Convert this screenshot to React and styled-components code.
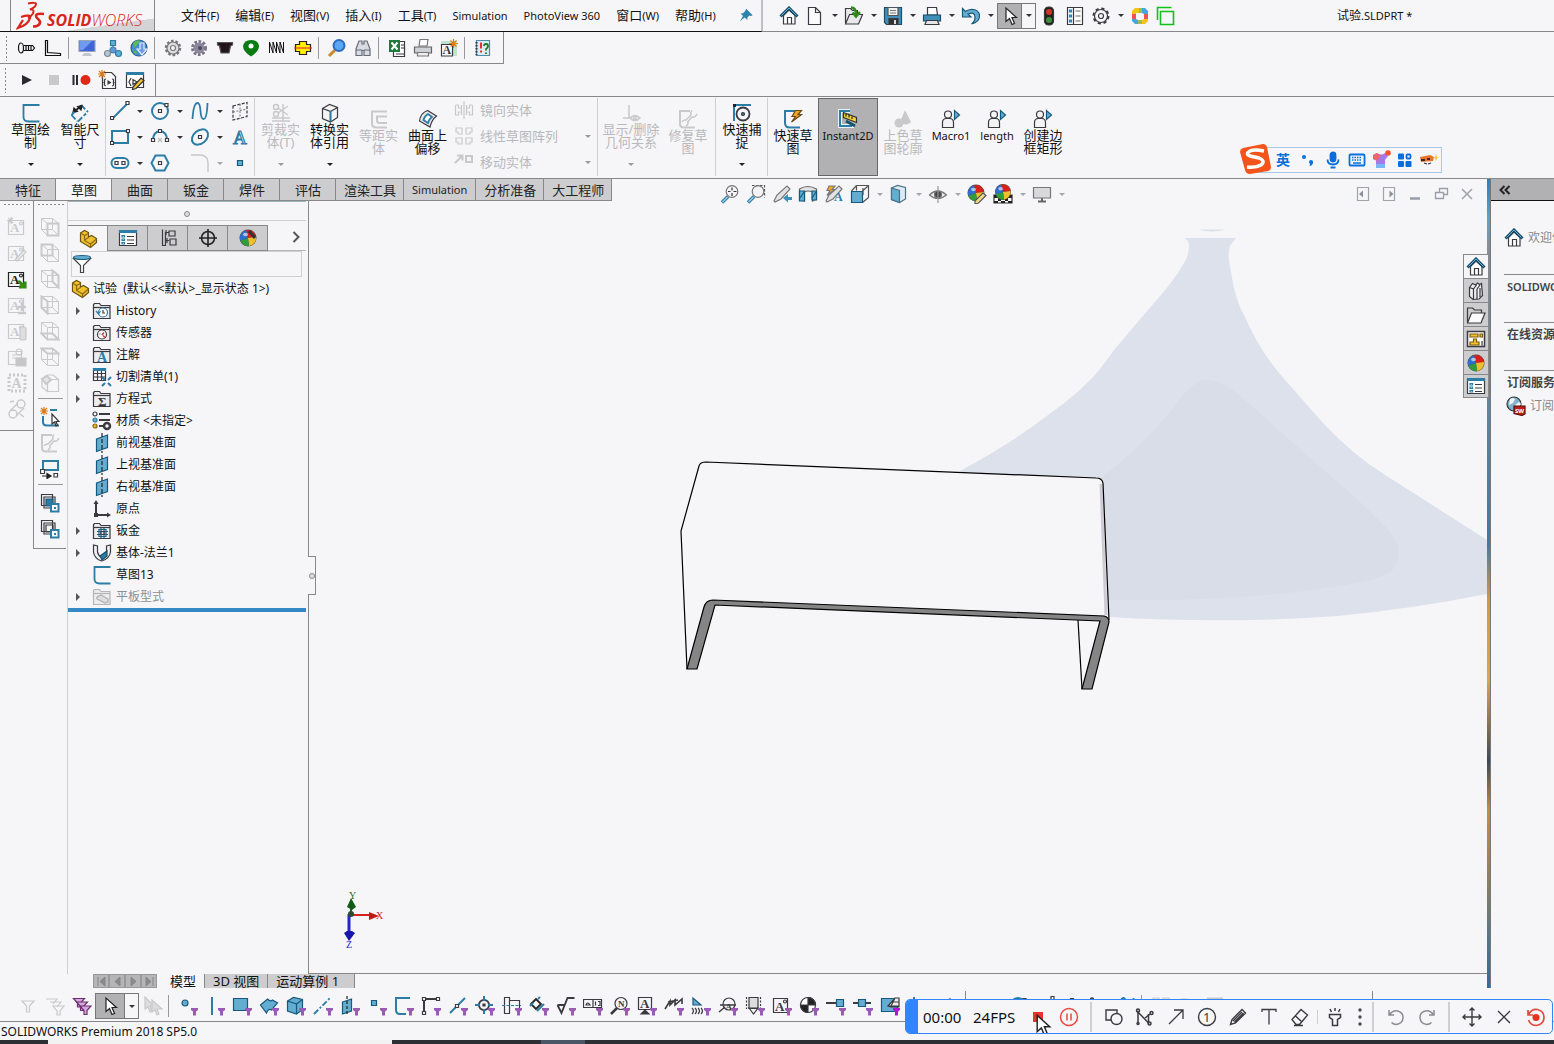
import React, { useState } from "react";
import styled, { createGlobalStyle, css } from "styled-components";

const DARK = "#3a3a40";
const STEEL = "#2c7da6";
const SKY = "#62add0";
const PALE = "#c9c9cb";
const PURPLE = "#9a5bb5";

/* ---------- shared drawing pieces ---------- */

const Folder = ({ color = DARK, children }) => (
  <>
    <path d="M1.5 17.5v-14l1-1h5l1.5 2h9v13z" fill="#ececee" stroke={color} />
    <path d="M1.5 6.5h16.5" stroke={color} />
    {children}
  </>
);

const Cube = ({ face, color = PALE }) => (
  <g stroke={color} strokeWidth="1">
    {face && <path d={face} strokeWidth="2" />}
    <path d="M1.5 1.5h11v11h-11zM7.5 6.5h11v12h-11zM1.5 1.5l6 5M12.5 1.5l6 5M1.5 12.5l6 6M12.5 12.5l6 6" />
  </g>
);

const Letter = ({ x = 3, y = 15, size = 14, weight = 700, color = DARK, children }) => (
  <text
    x={x}
    y={y}
    fontSize={size}
    fontFamily="Liberation Serif, serif"
    fontWeight={weight}
    fill={color}
    stroke="none"
  >
    {children}
  </text>
);

const NoteBox = ({ color = PALE, children }) => (
  <>
    <path d="M1.5 3.5h15v14h-15z" stroke={color} />
    <Letter x={3} y={15} size={13} color={color}>
      A
    </Letter>
    <circle cx="14" cy="6.5" r="1.5" stroke={color} />
    {children}
  </>
);

const Funnel = ({ color = PURPLE }) => (
  <path d="M13 12h7v2l-2 1.5v4h-3v-4l-2-1.5z" fill={color} stroke="none" />
);

const Ball = ({ cx = 10, cy = 10, r = 8 }) => (
  <g stroke="none" transform={`translate(${cx} ${cy}) scale(${r / 8})`}>
    <circle r="8.5" fill="#4a4a4a" />
    <path d="M0 0L-2-7.8A8 8 0 0 1 8-1z" fill="#d8201c" />
    <path d="M0 0L8-1A8 8 0 0 1 1 7.9z" fill="#f0c02c" />
    <path d="M0 0L1 7.9A8 8 0 0 1-7.6 2.5z" fill="#2f9e3a" />
    <path d="M0 0L-7.6 2.5A8 8 0 0 1-2-7.8z" fill="#2d6fd0" />
    <ellipse cx="-2.5" cy="-3.5" rx="2.5" ry="1.8" fill="#fff" opacity=".6" />
  </g>
);

const Lens = ({ children }) => (
  <>
    <path d="M2 18.500l6-6" stroke={STEEL} strokeWidth="3.500" />
    <path d="M2.5 18l5-5" stroke="#9ccbe2" strokeWidth="1.500" />
    <circle cx="12" cy="7.500" r="5.800" fill="#f4f4f6" stroke="#777" />
    {children}
  </>
);

const Macro = () => (
  <>
    <circle cx="7" cy="5.500" r="3.500" fill="#f4f4f4" />
    <path d="M1.5 18.5v-5q0-4 4-4h3q4 0 4 4v5z" fill="#f4f4f4" />
    <path d="M13.5 1.5v9l5-4.5z" fill={SKY} stroke="#17597c" />
  </>
);

const Plane = () => (
  <>
    <path d="M4.5 6l11-4v12.5l-11 4z" fill={SKY} stroke="#17597c" />
    <path d="M10 0v20" stroke="#222" strokeDasharray="4 2" />
  </>
);

const Grid4 = () => (
  <path
    d="M2 2h6v6h-4v-2h-2zM12 2h6v4h-2v2h-4zM2 12h6v6h-4v-2h-2zM12 12h6v4h-2v2h-4z"
    stroke={PALE}
  />
);

const Part = () => (
  <>
    <path
      d="M2.5 4l4-2.500 4 2v4.500l3-1.500 5 3v4l-6 5-10-6z"
      fill="#f1c22d"
      stroke="#6b5213"
    />
    <path
      d="M2.5 4l4 2.500 4-2M6.500 6.500v5l6 3.500 6-5M12.500 15v3.500M6.500 11l4-2.500"
      stroke="#8c6b16"
    />
  </>
);

const ListBoard = () => (
  <>
    <path d="M1.5 2.5h17v15h-17z" fill="#fff" />
    <path d="M1 3.5h18" stroke={STEEL} strokeWidth="3" />
    <path d="M4 7.5h2.5v1.5h-2.5zM4 11h2.5v1.5h-2.5zM4 14.5h2.5v1.5h-2.5z" stroke={STEEL} />
    <path d="M9 8.5h7M9 12h7M9 15.5h7" />
  </>
);

const icons = {
  /* quick access */
  home: (
    <>
      <path d="M4.5 9.5v8.5h11.5v-8.5l-6-5.5z" fill="#fff" />
      <path d="M1.5 10.5l8.5-8.5 8.5 8.5" stroke="#174f6c" strokeWidth="3" />
      <path d="M2.5 9.5l7.5-7.5 7.5 7.5" stroke={SKY} strokeWidth="1" />
      <path d="M8.5 18v-6.5h4v6.5" />
    </>
  ),
  file: <path d="M3.5 1.5h7l5 5v12h-12zM10.5 1.5v5h5" fill="#fbfbfb" />,
  open: (
    <>
      <path d="M1.5 17v-14.5h5l2 2h5v3.5M1.5 18l4-9.5h13l-4 9.5z" fill="#e9e9eb" />
      <path d="M7 1.5q5 0 5 7M8.500 6.500l3.500 4 4-4.500" stroke="#2f8a1b" strokeWidth="2.500" />
    </>
  ),
  save: (
    <>
      <path d="M1.5 1.5h17v17h-15l-2-2z" fill="#3f8fb7" stroke="#1a4f6b" />
      <path d="M5 1.5h10v8h-10z" fill="#f2f2f2" stroke="#555" />
      <path d="M7 4.5h6M7 7h6" stroke="#777" />
      <path d="M6 12.5h9v6h-9z" fill="#333" />
      <path d="M11 14h2v4h-2z" fill="#ddd" stroke="none" />
    </>
  ),
  print: (
    <>
      <path d="M5.5 9v-7.500h9l1 7.500z" fill="#fff" />
      <path d="M1.5 9h17v6h-17z" fill="#3f8fb7" stroke="#174f6c" />
      <path d="M4.5 14.5h11l1.5 4h-14z" fill="#e5e5e5" />
    </>
  ),
  undo: (
    <path
      d="M1.5 2.5v8.500h8.500l-3-3q7-3 7 3.500 0 4-3.500 6.500 8-2 8-8 0-7-9-6.500-3 .5-5 2z"
      fill={SKY}
      stroke="#17597c"
    />
  ),
  cursor: <path d="M6 2v13.5l3.5-3 2.5 6 2.5-1-2.5-6h4.5z" fill="#fff" stroke="#222" />,
  light: (
    <>
      <rect x="5.5" y="1" width="9" height="18" rx="4" fill="#222" />
      <circle cx="10" cy="6" r="3" fill="#d33426" stroke="none" />
      <circle cx="10" cy="14" r="3" fill="#3f8f3a" stroke="none" />
    </>
  ),
  options: (
    <>
      <path d="M2.5 1.5h15v17h-15z" fill="#fff" />
      <path d="M8.5 1.5v17" />
      <path d="M4.5 4h2v2h-2zM4.5 9h2v2h-2zM4.5 14h2v2h-2z" fill={SKY} stroke={STEEL} />
      <path d="M10.5 5h5M10.5 10h5M10.5 15h5" stroke="#666" />
    </>
  ),
  gear: (
    <>
      <circle cx="10" cy="10" r="7.5" strokeWidth="2" strokeDasharray="3.2 2.7" />
      <circle cx="10" cy="10" r="6.5" fill="#f6f6f6" />
      <circle cx="10" cy="10" r="2.5" />
    </>
  ),
  swatch: (
    <g stroke="none">
      <path d="M5 2h4v5h-3v3h-4v-5z" fill="#f0c419" />
      <path d="M9 2h3v5h-3z" fill="#9bbf57" />
      <path d="M12 2h3l3 3v3h-4l-2-1z" fill="#4aa3df" />
      <path d="M2 8h4v5h-4z" fill="#f0524f" />
      <path d="M14 8h4v5h-4z" fill="#f0524f" />
      <path d="M2 13h4l2 1v4h-3l-3-3z" fill="#4aa3df" />
      <path d="M8 14h4v4h-4z" fill="#9bbf57" />
      <path d="M12 14l2-1h4v2l-3 3h-3z" fill="#f0c419" />
    </g>
  ),
  windows: (
    <path d="M1.5 14v-12.5h14M4.5 5.5h13v13h-13z" stroke="#12c21c" strokeWidth="1.6" />
  ),
  pin: (
    <path
      d="M9 1l8 8-2 1-2-.5-2.500 2.500 0 3-3.500-3-6 5 4-7-3-3 3-.500 2.500-2.500z"
      fill="#2f84ad"
      stroke="none"
    />
  ),

  /* add-in row */
  bolt: (
    <>
      <ellipse cx="4" cy="10" rx="2.5" ry="5" stroke="#111" />
      <path d="M6.5 7.5h9l2 2.5-2 2.5h-9M9 7.5v5M11.5 7.5v5M14 7.5v5" stroke="#111" />
    </>
  ),
  angle: <path d="M2.5 2.5h2v12l13 1v2h-15z" stroke="#111" />,
  monitor: (
    <>
      <path d="M2 2.5h16v11h-16z" fill="#3e66d8" stroke="#9aa3b5" />
      <path d="M3 3h12l-9 9h-3z" fill="#6f9af0" stroke="none" />
      <path d="M7 15h6l2 3h-10z" fill="#c2c6cf" stroke="none" />
    </>
  ),
  network: (
    <>
      <path d="M10 6v5M5 15l5-4 5 4" stroke="#5c7080" />
      <path d="M7.5 2.5h5v5h-5z" fill={SKY} stroke={STEEL} />
      <circle cx="10" cy="12" r="3" fill="#5d9bd8" stroke="#4a7fb0" />
      <circle cx="4.5" cy="15.500" r="3" fill="#b8c6d2" stroke="#7c8a96" />
      <circle cx="15.500" cy="15.500" r="3" fill={SKY} stroke={STEEL} />
    </>
  ),
  globe: (
    <>
      <circle cx="10" cy="10" r="8" fill="#3f8fd2" stroke="#2d5b91" />
      <path d="M4 5q4-4 7-2l-3 4-3 3zM3 11l5 3-1 3.5z" fill="#5cb85c" stroke="none" />
      <path d="M11 5h4v6h3l-5 6-5-6h3z" fill="#6e9ce8" stroke="#e8eefc" />
    </>
  ),
  cogGray: (
    <>
      <circle cx="10" cy="10" r="7" stroke="#777" strokeWidth="2.5" strokeDasharray="2.6 1.8" />
      <circle cx="10" cy="10" r="6" fill="#ddd" stroke="#777" />
      <circle cx="10" cy="10" r="2.5" fill="#f6f6f9" stroke="#777" />
    </>
  ),
  cogDark: (
    <>
      <circle cx="10" cy="10" r="6.5" stroke="#777285" strokeWidth="3" strokeDasharray="2.6 1.6" />
      <circle cx="10" cy="10" r="5.5" fill="#8c879c" stroke="none" />
      <circle cx="11" cy="10" r="2" fill="#4f4a60" stroke="none" />
    </>
  ),
  pulley: <path d="M2.5 4.5h15v2.5l-2 1-1.500 7h-8l-1.500-7-2-1z" fill="#24141c" stroke="#555" />,
  cam: (
    <>
      <path d="M10 18.5q-8-5-8-10.500 1-6 8-6t8 6q0 5.500-8 10.500z" fill="#0a7a12" stroke="none" />
      <circle cx="10" cy="8" r="2.5" fill="#fff" stroke="none" />
    </>
  ),
  spring: (
    <path d="M2.5 15v-11l3.5 11v-11l3.500 11v-11l3.500 11v-11l3.500 11v-11" stroke="#111" strokeWidth="1" />
  ),
  cross: (
    <>
      <path d="M6.5 3.5h7v3h4v7h-4v3h-7v-3h-4v-7h4z" fill="#ffef00" stroke="#222" />
      <path d="M1 10h18" stroke="#e33" />
    </>
  ),
  search: (
    <>
      <path d="M2 18l6-6" stroke="#c98a2b" strokeWidth="3" />
      <circle cx="12" cy="7.5" r="5.5" fill="#5aa8f4" stroke="#2d6ac0" strokeWidth="2" />
    </>
  ),
  binoculars: (
    <path
      d="M3 11l3-8h3v3h2v-3h3l3 8v6.5h-6v-5h-2v5h-6zM3 12h6M11 12h6"
      fill="#d9dbe1"
      stroke="#666b78"
    />
  ),
  excel: (
    <>
      <path d="M6.5 3.5h11v15h-11z" fill="#fff" />
      <path d="M2 2h11v12h-11z" fill="#1e7a3c" stroke="none" />
      <path d="M4.5 4.5l6 7M10.5 4.5l-6 7" stroke="#fff" strokeWidth="2" />
      <path d="M14 7h3M14 10h3M9 16h8" />
    </>
  ),
  printer: (
    <>
      <path d="M6 8l1-6.5h8l-1 6.5z" fill="#fff" stroke="#777" />
      <path d="M1.5 9h17v6h-17z" fill="#cfd1d6" stroke="#666" />
      <path d="M4.5 14.5h11v3.5h-11z" fill="#eee" stroke="#777" />
    </>
  ),
  annotNew: (
    <>
      <path d="M2 3h16v15h-16z" fill="#bfe3cf" stroke="none" />
      <path d="M2.5 6.5h11v11.5h-11z" fill="#fff" />
      <Letter x={3.5} y={16} size={12}>
        A
      </Letter>
      <path d="M14.5 1v9M10 5.500h9M11.500 2.500l6 6M17.500 2.500l-6 6" stroke="#e07b12" />
    </>
  ),
  helpBook: (
    <>
      <path d="M3.5 2.5h13v15h-13z" fill="#dcecf2" stroke="#4e8bab" />
      <path d="M3.5 4v13" stroke="#333" strokeWidth="2" strokeDasharray="1.5 1.5" />
      <path d="M8 4.500v6M8 12.500v2" stroke="#d33" strokeWidth="2" />
      <path d="M11 8q0-2 2-2t2 2-2 3v1.500M13 14.500v1.500" stroke="#187a22" strokeWidth="1.800" />
    </>
  ),

  /* macro row */
  play: <path d="M5 5l10 5-10 5z" fill="#2b2b2f" stroke="none" />,
  stop: <path d="M5 5h10v10h-10z" fill={PALE} stroke="none" />,
  pauseRec: (
    <>
      <path d="M2.5 5v10M6 5v10" stroke="#2b2b2f" strokeWidth="2" />
      <circle cx="14.5" cy="10" r="5" fill="#dc2a17" stroke="none" />
    </>
  ),
  macroNew: (
    <>
      <path d="M4.5 2.5h9l4 4v12h-13z" fill="#f8f8f8" />
      <path d="M8 9q-2 0-1.500 2t-1 1.500q1.500 0 1 1.500t1.500 2M14 9q2 0 1.500 2t1 1.500q-1.500 0-1 1.500t-1.500 2" />
      <path d="M9.500 10v5l4-2.500z" fill={DARK} stroke="none" />
      <path d="M4 0v8M0 4h8M1 1l6 6M7 1l-6 6" stroke="#d97a1a" />
    </>
  ),
  macroEdit: (
    <>
      <path d="M1.5 2.5h17v15h-17z" fill="#fff" />
      <path d="M1 3.5h18" stroke={STEEL} strokeWidth="3" />
      <path d="M6 8l-2 4 2 4M8 9.5v5l4-2.5z" />
      <path d="M8 17l8-9 3 2.5-8 8-3.500 1z" fill="#f2c230" stroke="#333" />
    </>
  ),

  /* sketch ribbon */
  sketch: <path d="M18.5 2h-16v12q0 4.500 5 4.500h11" stroke={STEEL} strokeWidth="1.800" />,
  dimension: (
    <>
      <path d="M1.500 12l6 6.500M11 2l7 7M8 18.500l8-8" stroke={STEEL} strokeWidth="1.800" strokeDasharray="6 2" />
      <path d="M3 9.500l1-4.500 3.500 3.500zM12 2.500l-4.500 1 3.500 3.500z" fill="#222" stroke="#222" />
      <path d="M5 8l6-5" stroke="#222" strokeWidth="2" />
      <path d="M1.500 12l3-3" stroke={STEEL} strokeWidth="1.800" />
    </>
  ),
  line: (
    <>
      <path d="M3 17l14-14" stroke={STEEL} strokeWidth="2" />
      <path d="M.5 15.5h3v3h-3zM16 .5h3v3h-3z" fill="#fff" />
    </>
  ),
  circle: (
    <>
      <circle cx="10" cy="10" r="8" stroke={STEEL} strokeWidth="2" />
      <path d="M8.5 8.5h3v3h-3zM15 2.5h3v3h-3z" fill="#fff" />
    </>
  ),
  spline: (
    <path d="M2.5 18q1-16 5-16 2.500 0 3 8t3 8q3.500 0 4-16" stroke={STEEL} strokeWidth="1.800" />
  ),
  planeBox: (
    <>
      <path d="M3 5l14-3.500v14l-14 3.500z" strokeDasharray="3 1.5" />
      <path d="M10 3v15M3 11l14-3" stroke="#888" strokeDasharray="2 1.5" />
    </>
  ),
  rect: (
    <>
      <path d="M2 4h16v12h-16z" stroke={STEEL} strokeWidth="2" />
      <path d="M.5 14.5h3v3h-3zM16.5 2.5h3v3h-3z" fill="#fff" />
    </>
  ),
  arc: (
    <>
      <path d="M3 13q0-8 7-9 7 1 7 9" stroke={STEEL} strokeWidth="2" />
      <path d="M1.5 11.5h3v3h-3zM15.5 11.5h3v3h-3zM8.5 2.5h3v3h-3z" fill="#fff" />
      <path d="M8 11l4 4M12 11l-4 4" stroke="#bbb" />
    </>
  ),
  ellipse: (
    <>
      <ellipse cx="10" cy="10" rx="9" ry="6.5" transform="rotate(-40 10 10)" stroke={STEEL} strokeWidth="2" />
      <path d="M8.5 8.5h3v3h-3z" fill="#fff" />
    </>
  ),
  text: (
    <text x="3" y="17" fontSize="19" fontFamily="Liberation Serif, serif" fill="#fff" stroke={STEEL}>
      A
    </text>
  ),
  slot: (
    <>
      <rect x="1.5" y="5" width="17" height="10" rx="5" stroke={STEEL} strokeWidth="2" />
      <path d="M5 8.5h3v3h-3zM12 8.5h3v3h-3z" fill="#fff" />
    </>
  ),
  polygon: (
    <>
      <path d="M5.5 2.5h9l4 7.5-4 7.5h-9l-4-7.500z" stroke={STEEL} strokeWidth="2" />
      <path d="M8.5 8.5h3v3h-3z" fill="#fff" />
    </>
  ),
  fillet: <path d="M1 2h9q8 0 8 8v9" stroke={PALE} strokeWidth="1.5" />,
  point: <path d="M7.5 7.5h5v5h-5z" fill={SKY} stroke="#17597c" />,
  trim: (
    <g stroke={PALE} strokeWidth="1.5">
      <circle cx="5" cy="4" r="2.5" />
      <circle cx="5" cy="11" r="2.5" />
      <path d="M7 5l10 7M7 10l10-7M12 1v18M1 15h18M1 18h18" />
    </g>
  ),
  convert: (
    <>
      <path d="M2.5 5.5l7-4 8 3v10l-7 4.5-8-3.5zM2.5 5.5l8 3v10.5M10.5 8.5l7-4" fill="#f4f4f4" />
      <path d="M10.5 8v10.5" stroke={STEEL} strokeWidth="2" />
    </>
  ),
  offset: <path d="M18 2.5h-15v12q0 4 5 4h10M18 7.5h-10v4q0 2.500 3 2.500h7" stroke={PALE} strokeWidth="2" />,
  surfOffset: (
    <>
      <path d="M1.5 12q1-8 8-10.500l9 5.500q-5 4-6.500 11z" fill="#e8e8ea" />
      <path d="M5.5 11q1-4 4.500-6l4 3q-3 2-4 6z" fill="#fff" stroke={STEEL} strokeWidth="1.8" />
    </>
  ),
  mirror: (
    <path
      d="M10 1v18M1.5 5h3v3h3v-3M1.5 5v10h3v-3h3v3M7.500 5v10M18.500 5h-3v3h-3v-3M18.500 5v10h-3v-3h-3v3M12.500 5v10"
      stroke={PALE}
    />
  ),
  pattern: <Grid4 />,
  move: (
    <g stroke={PALE} strokeWidth="2">
      <path d="M1 11l7-7M3 3.500h5.500v5M12 4h6v6h-6z" />
    </g>
  ),
  relations: (
    <g stroke={PALE} strokeWidth="1.5">
      <path d="M8 2v13M2 15h7" />
      <path d="M9 15q5-5 10 0-5 5-10 0z" fill="#eee" />
      <circle cx="14" cy="15" r="1.5" />
    </g>
  ),
  repair: (
    <g stroke={PALE} strokeWidth="1.5">
      <path d="M12 2h-10v13q0 3.500 4 3.500h11" strokeWidth="2" />
      <path d="M14 1.5q-2 2-1 4.500l-5 5q-3-.500-4 2M19 5q-2 4-5 3l-4 4.500q.5 3-2 4.500" />
    </g>
  ),
  snap: (
    <>
      <path d="M2 18v-16h17" stroke={STEEL} strokeWidth="2" />
      <circle cx="11" cy="11" r="6.5" strokeWidth="1.8" />
      <circle cx="11" cy="11" r="1.500" fill={STEEL} />
      <path d="M1 1h3v3h-3z" fill="#222" stroke="none" />
    </>
  ),
  rapid: (
    <>
      <path d="M12 2h-10v12q0 4.500 5 4.500h10" stroke={STEEL} strokeWidth="2" />
      <path d="M12.5 1.5h6l-3.500 4h3.500l-10 7.500 4-5.500h-3.500z" fill="#f5a623" stroke="#6b4a10" />
    </>
  ),
  instant: (
    <>
      <path d="M12 2h-10v15h14" stroke="#e9f4fa" strokeWidth="4" />
      <path d="M12 2h-10v15h12" stroke={STEEL} strokeWidth="2" />
      <path d="M5.5 3.5l13 5v5l-13-5z" fill="#f7d433" stroke="#333" />
      <path d="M8 5v2.500M11 6v2.500M14 7.500v2.500" stroke="#222" />
      <path d="M8 12l9 5" stroke="#174f6c" strokeWidth="3" />
    </>
  ),
  shaded: (
    <g fill={PALE} stroke="none">
      <path d="M12 1l6 12q-5 5-11 0z" />
      <circle cx="6" cy="14" r="4.500" />
    </g>
  ),
  macro: <Macro />,

  /* heads-up view */
  zoomFit: (
    <Lens>
      <path d="M12 3.500v3M12 9v3M8 7.500h2.500M13.500 7.500h3" stroke="#333" />
    </Lens>
  ),
  zoomArea: (
    <>
      <path d="M6 1.500h12.500v12" stroke="#555" strokeDasharray="2.5 1.5" />
      <Lens />
    </>
  ),
  prevView: (
    <>
      <path d="M2 17l3-6 10-9 3 3-9 10-6 3z" fill="#e2e2e4" stroke="#777" />
      <path d="M11 14l5-4v3h4v3h-4v2.500z" fill="#3c8fba" stroke="none" />
    </>
  ),
  section: (
    <>
      <path d="M1.5 5q8-5 17 0v10l-4 2v-9q-5-2-8 0v9l-5-1z" fill="#e2e2e4" stroke="#666" />
      <path d="M1.5 7h5v10h-5zM14 7h4.500v9h-4.500z" fill={SKY} stroke="#17597c" />
      <path d="M2 14l4-6M14 14l4-6" stroke="#17597c" />
    </>
  ),
  annotView: (
    <>
      <path d="M2 17l3-6 10-9 3 3-9 10-6 3z" fill="#e2e2e4" stroke="#777" />
      <path d="M5 2h6l-3 3.500h3l-8 6 3-5h-3z" fill="#f5a623" stroke="#777" />
      <Letter x={10} y={17} size={12} color={STEEL}>
        A
      </Letter>
    </>
  ),
  viewCube: (
    <>
      <path d="M6.5 1.5h12v12M1.5 7l5-5.500M12.5 7l6-5.500M12.5 18.500l6-5M6.500 1.500v5" stroke="#555" />
      <path d="M1.5 7.5h11v11h-11z" fill={SKY} stroke="#17597c" />
      <path d="M13 4v7" stroke="#555" />
    </>
  ),
  displayStyle: (
    <>
      <path d="M2.5 4l6-2.5 8 2v11.5l-6 3.5-8-3z" fill="#dcebf2" stroke="#4c7186" />
      <path d="M2.5 4l8 2.5v12l-8-3z" fill={SKY} stroke="#4c7186" />
    </>
  ),
  eye: (
    <>
      <path d="M1.5 11q8-8 17 0-9 7-17 0z" fill="#eee" stroke="#777" />
      <circle cx="10" cy="10.5" r="3.5" fill="#444" stroke="#777" />
      <path d="M10 2v17" stroke="#999" />
    </>
  ),
  appearance: (
    <>
      <Ball cx={9} cy={9} />
      <path d="M8 17l8-8 3 2.5-7.500 7.500-3.500 1z" fill="#f2e08a" stroke="#555" />
    </>
  ),
  scene: (
    <>
      <path d="M1 11h18v8h-18z" fill="#fff" stroke="#333" />
      <path
        d="M1 11h4v3h-4zM15 11h4v3h-4zM5 14h3v3h-3zM12 14h3v3h-3zM1 17h4v2h-4zM8 17h4v2h-4zM15 17h4v2h-4z"
        fill="#222"
        stroke="none"
      />
      <Ball cx={10} cy={8} r={7.5} />
    </>
  ),
  screen: (
    <>
      <path d="M1.5 3.5h17v10.500h-17z" fill="#d9d9dc" stroke="#777" />
      <path d="M10 14v3M6 17.500h8" stroke="#666" strokeWidth="2" />
    </>
  ),
  paneLeft: (
    <>
      <path d="M4.5 3.5h11v13h-11z" stroke="#a0a2ac" />
      <path d="M10 6.5v7l-4-3.500z" fill="#8e909a" stroke="none" />
    </>
  ),
  paneRight: (
    <>
      <path d="M4.5 3.5h11v13h-11z" stroke="#a0a2ac" />
      <path d="M10.5 6.5v7l4-3.500z" fill="#8e909a" stroke="none" />
    </>
  ),
  minimize: <path d="M5 14.5h10" stroke="#9a9ca6" strokeWidth="2.5" />,
  restore: <path d="M4.5 8.5h8v6h-8zM8.5 8v-3.500h8v6h-4" stroke="#9a9ca6" strokeWidth="1.3" />,
  close: <path d="M5 5l10 10M15 5l-10 10" stroke="#a0a2a8" strokeWidth="1.5" />,

  /* left bars */
  note1: (
    <NoteBox>
      <path d="M4 0v7M0 3.500h8M1 1l5 5M6 1l-5 5" stroke={PALE} />
    </NoteBox>
  ),
  note2: (
    <NoteBox>
      <path d="M8 17l9-10 2 2-9 9z" fill="#eee" stroke={PALE} />
    </NoteBox>
  ),
  note3: (
    <NoteBox color="#222">
      <path d="M11 12h2l4 4v-3l2 0v6h-6.500v-2h2z" fill="#3a8a12" stroke="#3a8a12" />
    </NoteBox>
  ),
  note4: (
    <NoteBox>
      <path d="M11 12h8M15 8v8M11 18h8" stroke={PALE} strokeWidth="2.5" />
    </NoteBox>
  ),
  note5: (
    <NoteBox>
      <rect x="13" y="6" width="6" height="13" rx="2" fill="#ddd" stroke={PALE} />
    </NoteBox>
  ),
  note6: (
    <g stroke={PALE}>
      <path d="M1.5 4.5h13v13h-13zM5 8h9M5 11h9" />
      <path d="M9 11h10v8h-10z" fill="#c6c6c8" />
      <circle cx="12" cy="5" r="3" />
    </g>
  ),
  note7: (
    <>
      <path d="M2 2h16v16h-16z" stroke={PALE} strokeWidth="3" strokeDasharray="2 2" />
      <Letter x={4.5} y={15} size={14} color={PALE}>
        A
      </Letter>
    </>
  ),
  note8: (
    <g stroke={PALE} strokeWidth="1.5">
      <circle cx="6" cy="15" r="4" />
      <circle cx="14" cy="5" r="4" />
      <path d="M3 12l8-8M9 17l8-8M13 15l4 3M3 3l4-1" />
    </g>
  ),
  cube1: <Cube face="M7.5 6.5h11v12h-11z" />,
  cube2: <Cube face="M1.5 1.5h11v11h-11z" />,
  cube3: <Cube face="M12.5 1.5l6 5v12l-6-6z" />,
  cube4: <Cube face="M1.5 1.5l6 5v12l-6-6z" />,
  cube5: <Cube face="M1.5 12.5l6 6h11l-6-6z" />,
  cube6: <Cube face="M1.5 1.5l6 5h11l-6-5z" />,
  cube7: (
    <g stroke={PALE}>
      <path d="M7.5 6.5h11v12h-11zM2 6l5-4 6 0 5.500 4.500M2 6v8l6 5" />
      <path d="M2 6l4 5 5-4-4-4z" fill="#e4e4e4" strokeWidth="2" />
    </g>
  ),
  sketchSelect: (
    <>
      <path d="M10 3h7M3 9v6q0 3.500 4 3.500h12" stroke={STEEL} strokeWidth="2" />
      <path d="M4 0v8M0 4h8M1 1l6 6M7 1l-6 6" stroke="#d97a1a" />
      <path d="M12 7v10l2.500-2 1.500 4 1.500-.500-1.500-4h3z" fill="#fff" stroke="#333" />
    </>
  ),
  path: (
    <>
      <path d="M3 2h15v9h-15z" stroke={STEEL} strokeWidth="2" />
      <path d="M.5 10.5h4v4h-4zM14 14.5h3.500v3.500h-3.500z" fill="#fff" />
      <path d="M2 17h8M7 14.5l4 2.500-4 2.500z" fill="#222" stroke="#222" />
    </>
  ),
  layersA: (
    <>
      <path d="M1.5 1.5h11v11h-11zM4 4h11v11h-11z" fill="#eee" />
      <path d="M6 6h7v7h-7z" fill={STEEL} stroke="#17597c" />
      <path d="M11 11h7.500v7.500h-7.500z" fill="#fff" stroke={STEEL} strokeWidth="2" />
      <path d="M14 14h2v2h-2z" fill={STEEL} stroke="none" />
    </>
  ),
  layersB: (
    <>
      <path d="M1.5 1.5h11v11h-11zM4 4h11v11h-11zM6 6h7v7h-7z" fill="#f4f4f4" />
      <path d="M11 11h7.500v7.500h-7.500z" fill="#fff" stroke={STEEL} strokeWidth="2" />
      <path d="M14 14h2v2h-2z" fill={STEEL} stroke="none" />
    </>
  ),

  /* feature tree */
  part: <Part />,
  listBoard: <ListBoard />,
  config: (
    <>
      <path d="M4.5 1.5v16h3v-13h3M7 12.500h4M11 3h6v5h-6zM12 11h6v6h-6z" />
      <path d="M8 2v5M9 10v5" />
    </>
  ),
  target: (
    <>
      <circle cx="10" cy="10" r="6.5" stroke="#222" strokeWidth="1.6" />
      <path d="M10 1v18M1 10h18" stroke="#222" strokeWidth="1.6" />
    </>
  ),
  ball: (
    <>
      <Ball cx={10} cy={10} />
      <path d="M11 3l6 7" stroke="#333" strokeWidth="3" />
    </>
  ),
  ballPlain: <Ball cx={10} cy={10} />,
  filter: (
    <>
      <path d="M1.5 4.500l7 7v7h3v-7l7-7z" fill="#fff" stroke="#444" />
      <ellipse cx="10" cy="3.500" rx="8.500" ry="2" fill={SKY} stroke="#1d5f80" />
    </>
  ),
  history: (
    <Folder>
      <circle cx="11" cy="11.5" r="4.500" fill="#fff" stroke={STEEL} />
      <path d="M4 10l2.500 3 2-3" stroke={STEEL} />
      <path d="M11 9v3h2" />
    </Folder>
  ),
  sensor: (
    <Folder>
      <circle cx="10" cy="11.5" r="4.500" fill="#fff" />
      <path d="M10 12l2-2.500M11 12.500l2 2" stroke="#d33" strokeWidth="1.500" />
      <path d="M7.500 11h1" />
    </Folder>
  ),
  annotations: (
    <Folder>
      <Letter x={5} y={17} size={14} color={STEEL}>
        A
      </Letter>
    </Folder>
  ),
  cutlist: (
    <>
      <path d="M1.5 1.5h12v12h-12zM5.5 3v10M9.5 3v10M1.5 6.5h12M1.5 10h12" fill="#fff" />
      <path d="M1 2.5h13" stroke={STEEL} strokeWidth="3" />
      <path d="M10 10l3 3M19 10l-3 3M10 19l3-3M19 19l-3-3" stroke={STEEL} strokeWidth="2" />
    </>
  ),
  equations: (
    <Folder>
      <Letter x={6} y={17} size={13}>
        Σ
      </Letter>
    </Folder>
  ),
  material: (
    <>
      <circle cx="3" cy="3" r="2" />
      <circle cx="3" cy="9" r="2" fill={SKY} stroke={STEEL} />
      <circle cx="3" cy="15" r="2" fill="#f1b51c" stroke="#8a6510" />
      <path d="M7 3h11M7 9h11M7 15h4" strokeWidth="2" />
      <circle cx="15" cy="15" r="3" strokeWidth="2.5" />
    </>
  ),
  plane: <Plane />,
  origin: (
    <>
      <path d="M4 3v13h12" strokeWidth="2" />
      <path d="M1.5 5l2.5-4 2.5 4zM15 13.5l4 2.500-4 2.500zM2 14h4v4h-4z" fill={DARK} stroke="none" />
    </>
  ),
  sheetmetal: (
    <Folder>
      <path d="M7 8.500h7v7h-7zM9 6.500v11M12 6.500v11M5 10.500h11M5 13.500h11" stroke="#1d5f80" />
      <path d="M9 10.500h3v3h-3z" fill="#ddd" />
    </Folder>
  ),
  flange: (
    <>
      <path d="M1.5 2v7q1 7 8 9 8-2 9-9v-7l-4 1v6q-1 4-5 5-3-1-4-5v-6z" fill="#f0f0f2" />
      <path d="M8 13l7-5v5l-5 4z" fill={STEEL} stroke="#174f6c" />
    </>
  ),
  flat: (
    <Folder color="#b5b5b8">
      <path d="M5 10l4-2 7 4v3l-3 1-8-4z" stroke="#b0b0b4" fill="#ddd" />
    </Folder>
  ),

  /* task pane */
  library: (
    <>
      <path d="M3.5 6.5l3-4 3 1.5 2-2 2 1.5 2-1 1 12-3.500 3.500-6 .5-3.500-3z" fill="#eee" />
      <path d="M3.5 6.5l4 1.5v10M7.500 8l3-4M11 8v10.500M11 8l3-4M14 7v9" />
    </>
  ),
  folderOpen: (
    <>
      <path d="M1.5 17v-14h5l2 2h7v3" fill="#ccc" />
      <path d="M1.5 18l4-10h13.500l-4 10z" fill="#fbfbfb" />
    </>
  ),
  palette: (
    <>
      <path d="M1.5 2.5h17v15h-17z" fill="#fff" strokeWidth="1.5" />
      <path
        d="M4 5h8v3h-8zM14 5h2.500v3h-2.500zM7.500 10h3v3h2.500v3h-9v-3h3.500z"
        fill="#f3c22c"
        stroke="#7a5c10"
      />
      <path d="M15 12h2v5h-2z" fill="#888" stroke="none" />
    </>
  ),
  swGlobe: (
    <>
      <circle cx="8" cy="8" r="7" fill="#7fb4cf" stroke="#333" />
      <path d="M4 3q3-2 5 0l-2 4-4 2zM9 9l4-3 2 2-3 5z" fill="#f4f4f4" stroke="none" />
      <path d="M8 10h11v8l-3 1.5-8-2z" fill="#b8201c" stroke="#5c0d0b" />
      <text x="9" y="17" fontSize="6" fontWeight="700" fill="#fff" stroke="none">
        SW
      </text>
    </>
  ),

  /* selection filters */
  funnelGray: <path d="M4 5h12l-4.500 5v6h-3v-6z" stroke={PALE} />,
  funnelsGray: <path d="M1 3h11l-4 5M5 6h11l-4 5M8 10h11l-4 5v4h-3v-4z" stroke={PALE} />,
  funnels: (
    <g stroke="#6d2f73" fill="#d9a8dc">
      <path d="M1.5 2.5h11l-4 4.5v4h-3v-4z" />
      <path d="M4.5 6h11l-4 4.5v4h-3v-4z" />
      <path d="M8 10h11l-4 4.5v4h-3v-4z" />
    </g>
  ),
  cursorGray: (
    <g fill="#dcdcde" stroke={PALE}>
      <path d="M2 1v12l3-2 2 5 2-1-2-5h4z" />
      <path d="M9 4v12l3-2 2 5 2-1-2-5h5z" />
    </g>
  ),
  fVertex: <circle cx="7" cy="7" r="3" fill={SKY} stroke="#17597c" />,
  fEdge: <path d="M7 1v18" stroke={STEEL} strokeWidth="2" />,
  fFace: <path d="M1.5 2.5h14v12h-14z" fill={SKY} stroke="#17597c" />,
  fSurface: <path d="M1.5 9l7-6q3 3 5 1l5 3-6 7q-3-2-5 3z" fill={SKY} stroke="#17597c" />,
  fSolid: (
    <>
      <path d="M1.5 5l6-3.5 9 2v10l-6 4.5-9-3z" fill={SKY} stroke="#17597c" />
      <path d="M1.5 5l9 3v10M10.5 8l6-4.5" stroke="#17597c" />
    </>
  ),
  fAxis: <path d="M1 18l16-16" stroke={STEEL} strokeWidth="1.8" strokeDasharray="6 2 2 2" />,
  fPlane: (
    <>
      <path d="M2.5 6l9-3v12l-9 3z" fill={SKY} stroke="#17597c" />
      <path d="M7 0v20" stroke="#222" strokeDasharray="3 2" />
    </>
  ),
  fPoint: <path d="M4.5 4.5h5v5h-5z" fill={SKY} stroke="#17597c" />,
  fSketch: <path d="M16 2h-14v12q0 4 4 4h6" stroke={STEEL} strokeWidth="2" />,
  fSegment: (
    <>
      <path d="M3 17v-14h14" strokeWidth="2" />
      <path d="M1.5 15.5h3v3h-3zM1.5 1.5h3v3h-3zM15.5 1.5h3v3h-3z" fill="#fff" />
    </>
  ),
  fMid: (
    <>
      <path d="M2 17l15-15" stroke={STEEL} strokeWidth="2" />
      <path d="M7.5 8.5h3v3h-3z" fill="#fff" />
    </>
  ),
  fCenter: (
    <>
      <circle cx="9" cy="9" r="5" strokeWidth="2" />
      <path d="M9 0v5M9 13v5M0 9h5M13 9h5" stroke={STEEL} strokeWidth="2" />
      <path d="M8 8h2v2h-2z" fill={DARK} />
    </>
  ),
  fCenterline: (
    <>
      <path d="M2.5 1.5h5v16h-5zM7.5 4.5h10v9" />
      <path d="M0 9.5h19" stroke={STEEL} strokeDasharray="3 1.5" />
    </>
  ),
  fDim: (
    <>
      <path d="M2 8l5-5 5 5-5 5z" strokeWidth="1.800" stroke="#222" />
      <path d="M8 15l7-7M9 3l2-2M1 10l3-3" stroke={STEEL} strokeWidth="2" />
    </>
  ),
  fFinish: <path d="M1.5 9l4 8 6-15h7M1.5 9h7" strokeWidth="1.8" />,
  fGtol: (
    <>
      <path d="M.5 3.5h18v8h-18zM10 3.5v8M3 9q1.500-4 4 0z" />
      <path d="M12.5 5.5v4M15 5.5h2v4h-2" strokeWidth="1.2" />
    </>
  ),
  fNote: (
    <>
      <path d="M1 18l6-6" strokeWidth="2.5" />
      <circle cx="11" cy="7.5" r="6" />
      <Letter x={8} y={11} size={9}>
        N
      </Letter>
    </>
  ),
  fDatum: (
    <>
      <path d="M1.5 1.5h13v12h-13z" />
      <Letter x={3} y={12} size={13}>
        A
      </Letter>
      <path d="M4 18l4-4 4 4z" fill={DARK} />
    </>
  ),
  fWeld: <path d="M1 13l5-8v4l5-5v5l7-6v5M4 6l10-2" strokeWidth="1.6" />,
  fBead: (
    <>
      <path d="M2 2v7h8z" fill={SKY} stroke="#17597c" />
      <path d="M1 12q3 3 0 6M4 12q3 3 0 6M7 12q3 3 0 6M10 12q3 3 0 6" />
    </>
  ),
  fBalloon: (
    <>
      <path d="M1 16l6-5M2 9h16" strokeWidth="1.5" />
      <circle cx="11" cy="8" r="6" />
      <Letter x={7.5} y={14} size={9}>
        A
      </Letter>
    </>
  ),
  fCosmetic: (
    <>
      <path d="M4 1.5h9v11h-9z" fill="#ddd" />
      <path d="M1.5 1v12M15.5 1v12" strokeDasharray="2 1.5" />
      <path d="M4 12l4.500 6 4.500-6z" />
    </>
  ),
  fBlock: (
    <>
      <path d="M1.5 2.5h14v14h-14z" />
      <Letter x={3} y={15} size={13}>
        A
      </Letter>
      <circle cx="13" cy="5.5" r="1.5" />
    </>
  ),
  fCog: (
    <>
      <circle cx="9" cy="9" r="7.5" fill="#fff" />
      <path
        d="M9 9v-7.5a7.5 7.5 0 0 1 7.5 7.5zM9 9v7.5a7.5 7.5 0 0 1-7.5-7.5z"
        fill="#222"
      />
    </>
  ),
  fConnA: (
    <>
      <path d="M0 7h11" strokeWidth="2" />
      <path d="M10.5 3.5h7v7h-7z" fill={SKY} stroke="#17597c" />
    </>
  ),
  fConnB: (
    <>
      <path d="M0 7h18" strokeWidth="2" />
      <path d="M5.5 3.5h7v7h-7z" fill={SKY} stroke="#17597c" />
    </>
  ),
  fMesh: (
    <>
      <path d="M1.5 2.5h16v13h-16z" fill={SKY} stroke="#17597c" />
      <path d="M8 10l7-8h4v9h-8zM11 10l4-8M11 6h8M8 10l11 0" fill="#eee" />
    </>
  ),

  /* recorder */
  recStop: <path d="M5 5h10v10h-10z" fill="#e2382a" stroke="none" />,
  recPause: (
    <g stroke="#e5493c" strokeWidth="1.5">
      <circle cx="10" cy="10" r="8.5" />
      <path d="M8 6.500v7M12 6.500v7" />
    </g>
  ),
  shapes: (
    <g strokeWidth="1.4">
      <path d="M7 13h-5v-10h11v3" />
      <circle cx="12.5" cy="12" r="5.5" />
    </g>
  ),
  polyline: (
    <g strokeWidth="1.5">
      <path d="M3 16v-11l10.500 11v-9" />
      <circle cx="3" cy="3.500" r="1.500" />
      <circle cx="3" cy="16.500" r="1" />
      <circle cx="14.500" cy="16.500" r="1.500" />
      <circle cx="16.500" cy="6" r="1.500" />
      <path d="M10 11l5-4" />
    </g>
  ),
  arrow: <path d="M3 17l14-14M8 3h9v9" strokeWidth="1.3" />,
  step: (
    <>
      <circle cx="10" cy="10" r="8.5" strokeWidth="1.4" />
      <text x="6" y="15" fontSize="13" fill={DARK} stroke="none">
        1
      </text>
    </>
  ),
  pencil: (
    <path d="M2.5 17.5l1.5-5 10-10 3.500 3.500-10 10zM5 14l9-9M6.500 15l9-9" strokeWidth="1.4" />
  ),
  letter: <path d="M3 5v-2.5h14v2.5M10 2.5v15" strokeWidth="1.3" />,
  eraser: <path d="M2 12.5l9-10 6.500 5.500-8 9.500h-3.500zM5.500 9l6.500 6M4 18.500h9" strokeWidth="1.4" />,
  torch: (
    <path
      d="M4.5 7.500h11v3l-3 2v6h-5v-6l-3-2zM10 1v3M5 2l1.500 3M15 2l-1.500 3"
      strokeWidth="1.5"
    />
  ),
  dots: (
    <g fill="#4a4a50" stroke="none">
      <circle cx="10" cy="3" r="1.7" />
      <circle cx="10" cy="10" r="1.7" />
      <circle cx="10" cy="17" r="1.7" />
    </g>
  ),
  back: (
    <path
      d="M3 3v5h5M3.500 8q3-5 8-4 6 1.500 5.500 7t-6.500 6.500q-3 0-5-2"
      stroke="#8c8c90"
      strokeWidth="1.5"
    />
  ),
  forward: (
    <path
      d="M17 3v5h-5M16.500 8q-3-5-8-4-6 1.500-5.500 7t6.500 6.500q3 0 5-2"
      stroke="#8c8c90"
      strokeWidth="1.5"
    />
  ),
  drag: (
    <path
      d="M10 1v18M1 10h18M7.5 3.5l2.5-2.5 2.5 2.5M7.5 16.5l2.5 2.5 2.5-2.500M3.500 7.500l-2.500 2.500 2.500 2.500M16.500 7.500l2.500 2.500-2.500 2.500"
      strokeWidth="1.4"
    />
  ),
  quit: <path d="M4 4l12 12M16 4l-12 12" strokeWidth="1.4" />,
  restart: (
    <>
      <path
        d="M2 3v5h5M2.500 7.500q3-6 9-5 6.500 1.500 6.500 8t-7.500 8q-6 0-8-5.500"
        stroke="#e5493c"
        strokeWidth="1.7"
      />
      <circle cx="10" cy="10.5" r="3.5" fill="#e5331f" stroke="none" />
    </>
  ),

  /* input method bar */
  punct: (
    <g fill="#0a6fdc" stroke="none">
      <circle cx="5" cy="7" r="2" />
      <circle cx="12" cy="12" r="2" />
      <path d="M14 12q0 3-3 4l-.5-1q1.500-1 1.500-3z" />
    </g>
  ),
  mic: (
    <g stroke="#0a6fdc" strokeWidth="1.8">
      <rect x="7.5" y="2.5" width="5" height="9" rx="2.5" fill="#0a6fdc" />
      <path d="M4.5 9.5q0 5 5.5 5t5.500-5M7.500 17.500h5" />
    </g>
  ),
  keyboard: (
    <>
      <rect x="2.5" y="4.5" width="15" height="11" rx="1" stroke="#0a6fdc" strokeWidth="1.8" />
      <path d="M5 7.5h10M5 10h10" stroke="#0a6fdc" strokeWidth="1.5" strokeDasharray="1.5 1" />
      <path d="M6 13h8" stroke="#0a6fdc" strokeWidth="1.5" />
    </>
  ),
  shirt: (
    <g stroke="none">
      <path d="M2 5l4-2q4 3 8 0l3 3-3 4v8h-9v-8l-3-1z" fill="#a779e8" />
      <path d="M2 5l4-2q2 2 4 2l-4 6-4-2z" fill="#f2646c" />
      <path d="M5 14h9v4h-9z" fill="#7ab8f5" />
      <circle cx="17" cy="3" r="2.8" fill="#f4512c" />
    </g>
  ),
  tiles: (
    <g fill="#0a6fdc" stroke="none">
      <rect x="3" y="3.5" width="6" height="6" rx="1" />
      <rect x="3" y="11" width="6" height="6" rx="1" />
      <rect x="10.5" y="11" width="6" height="6" rx="1" />
      <rect x="11.5" y="4.5" width="4" height="4" rx="1" stroke="#0a6fdc" strokeWidth="1.8" fill="none" />
    </g>
  ),
  mascot: (
    <g stroke="none">
      <path d="M1 7l10-2 4 2-1 4-12 1z" fill="#e8742c" />
      <path d="M2 9h4v2h-4zM8 8h3v2h-3z" fill="#3a2a22" />
      <path d="M5 13l3 1M9 14l3-1" stroke="#333" />
      <path d="M17 4l1 3 2 .5-2 .8-1 3-1-3-2-.8 2-.5z" fill="#f7c843" />
    </g>
  ),
};

const Icon = ({ name, size = 20 }) => (
  <Svg
    width={size}
    height={size}
    viewBox="0 0 20 20"
    fill="none"
    stroke={DARK}
    strokeWidth="1.2"
    aria-hidden="true"
  >
    {icons[name]}
    {/^f[A-Z]/.test(name) && <Funnel color={name === "fMesh" ? "#b512d8" : PURPLE} />}
  </Svg>
);

/* ---------- data ---------- */

const menus = [
  ["文件", "(F)"],
  ["编辑", "(E)"],
  ["视图", "(V)"],
  ["插入", "(I)"],
  ["工具", "(T)"],
  ["", "Simulation"],
  ["", "PhotoView 360"],
  ["窗口", "(W)"],
  ["帮助", "(H)"],
];

const quickTools = ["home", "file", "v", "open", "v", "save", "v", "print", "v", "undo", "v"];
const quickTools2 = ["light", "options", "gear", "v", "swatch", "windows"];

const addinTools = [
  "bolt", "angle", "|", "monitor", "network", "globe", "|",
  "cogGray", "cogDark", "pulley", "cam", "spring", "cross", "|",
  "search", "binoculars", "|", "excel", "printer", "annotNew", "|", "helpBook",
];

const macroTools = ["play", "stop", "pauseRec", "macroNew", "macroEdit"];

const sketchCells = [
  ["line", true], ["circle", true], ["spline", true], ["planeBox"],
  ["rect", true], ["arc", true], ["ellipse", true], ["text"],
  ["slot", true], ["polygon"], ["fillet", true], ["point"],
];

const tabs = [
  "特征", "草图", "曲面", "钣金", "焊件", "评估", "渲染工具", "Simulation", "分析准备", "大工程师",
];

const viewTools = [
  "zoomFit", "zoomArea", "prevView", "section", "annotView", "viewCube", "v",
  "displayStyle", "v", "eye", "v", "appearance", "scene", "v", "screen", "v",
];

const windowTools = ["paneLeft", "paneRight", "minimize", "restore", "close"];

const noteTools = ["note1", "note2", "note3", "note4", "note5", "note6", "note7", "note8"];
const cubeTools = [
  "cube1", "cube2", "cube3", "cube4", "cube5", "cube6", "cube7", "|",
  "sketchSelect", "repair", "path", "|", "layersA", "layersB",
];

const panelTabs = ["part", "listBoard", "config", "target", "ball"];

const tree = [
  { icon: "history", label: "History", open: true },
  { icon: "sensor", label: "传感器" },
  { icon: "annotations", label: "注解", open: true },
  { icon: "cutlist", label: "切割清单(1)", open: true },
  { icon: "equations", label: "方程式", open: true },
  { icon: "material", label: "材质 <未指定>" },
  { icon: "plane", label: "前视基准面" },
  { icon: "plane", label: "上视基准面" },
  { icon: "plane", label: "右视基准面" },
  { icon: "origin", label: "原点" },
  { icon: "sheetmetal", label: "钣金", open: true },
  { icon: "flange", label: "基体-法兰1", open: true },
  { icon: "sketch", label: "草图13" },
  { icon: "flat", label: "平板型式", open: true, off: true },
];

const taskTabs = ["home", "library", "folderOpen", "palette", "ballPlain", "listBoard"];

const filterTools = [
  "fVertex", "fEdge", "fFace", "fSurface", "fSolid", "fAxis", "fPlane", "fPoint", "fSketch",
  "fSegment", "fMid", "fCenter", "fCenterline", "fDim", "fFinish", "fGtol", "fNote", "fDatum",
  "fWeld", "fBead", "fBalloon", "fCosmetic", "fBlock", "fCog", "fConnA", "fConnB", "fMesh",
  "fEdge", "fAxis",
];

const tailTools = ["circle", "line", "arc", "polyline", "spline", "|", "pattern", "move", "offset"];

const recorderTools = ["shapes", "polyline", "arrow", "step", "pencil", "letter", "eraser"];

const sheetArrows = [
  "M3 2v9M10 2v9l-5-4.5z",
  "M9 2v9l-5-4.5z",
  "M4 2v9l5-4.5z",
  "M10 2v9M3 2v9l5-4.5z",
];

/* ---------- parts ---------- */

const Tools = ({ items, width = 26, soft }) =>
  items.map((name, i) => {
    if (name === "|") return <Divider key={i} />;
    if (name === "v") return <Caret key={i} $soft={soft} aria-label="更多" />;
    return (
      <ToolButton key={i} $width={width} aria-label={name}>
        <Icon name={name} />
      </ToolButton>
    );
  });

const RibbonItem = ({ icon, label, width = 49, drop, off, active }) => (
  <RibbonButton $width={width} $drop={drop} $off={off} $active={active} disabled={off}>
    <Icon name={icon} />
    <RibbonLabel $latin={/^[A-Z]/i.test(label)}>{label}</RibbonLabel>
    {drop && <Triangle $off={off} />}
  </RibbonButton>
);

const Logo = () => (
  <LogoBox>
    <svg width="30" height="30" viewBox="0 0 30 30" fill="none" stroke="#d9261c" aria-hidden="true">
      <path d="M12 2.500q8-1.500 8 .500 0 3-6 5.500 5-.500 3 4-2 3-5 4.500" strokeWidth="2" />
      <path d="M5 16q10-3 9 1-2 7-12 10l5-8" strokeWidth="2.300" />
      <path d="M28 13q-8-1-8 2 0 1.500 2.500 3.500t1 4.500-6.500 2.500" strokeWidth="2.600" />
    </svg>
    <LogoText>
      <b>SOLID</b>WORKS
    </LogoText>
  </LogoBox>
);

const TopBar = () => (
  <TopRow>
    <MenuArea>
      <TopGap />
      <Logo />
      <MenuNav>
        {menus.map(([text, key]) => (
          <MenuButton key={key}>
            {text}
            <small>{key}</small>
          </MenuButton>
        ))}
      </MenuNav>
      <PinSlot aria-label="固定">
        <Icon name="pin" size={16} />
      </PinSlot>
    </MenuArea>
    <QuickArea>
      <Tools items={quickTools} />
      <SelectSplit>
        <SelectMain aria-label="选择">
          <Icon name="cursor" />
        </SelectMain>
        <Caret aria-label="选择选项" />
      </SelectSplit>
      <Tools items={quickTools2} />
      <DocTitle>
        试验<small>.SLDPRT *</small>
      </DocTitle>
    </QuickArea>
  </TopRow>
);

const Ribbon = () => (
  <RibbonRow>
    <RibbonGroup $pad={6}>
      <RibbonItem icon="sketch" label={"草图绘\n制"} drop />
      <RibbonItem icon="dimension" label={"智能尺\n寸"} width={50} drop />
    </RibbonGroup>
    <SketchGrid>
      {sketchCells.map(([name, drop]) => (
        <SketchCell key={name}>
          <ToolButton $width={26} aria-label={name}>
            <Icon name={name} />
          </ToolButton>
          {drop && <Caret $soft={name === "fillet"} aria-label="更多" />}
        </SketchCell>
      ))}
    </SketchGrid>
    <RibbonGroup $pad={1}>
      <RibbonItem icon="trim" label={"剪裁实\n体(T)"} drop off />
      <RibbonItem icon="convert" label={"转换实\n体引用"} drop />
      <RibbonItem icon="offset" label={"等距实\n体"} off />
      <RibbonItem icon="surfOffset" label={"曲面上\n偏移"} />
      <SideList>
        <SideItem disabled>
          <Icon name="mirror" />
          <span>镜向实体</span>
        </SideItem>
        <SideItem disabled>
          <Icon name="pattern" />
          <span>线性草图阵列</span>
          <Triangle $off />
        </SideItem>
        <SideItem disabled>
          <Icon name="move" />
          <span>移动实体</span>
          <Triangle $off />
        </SideItem>
      </SideList>
    </RibbonGroup>
    <RibbonGroup $pad={3}>
      <RibbonItem icon="relations" label={"显示/删除\n几何关系"} width={60} drop off />
      <RibbonItem icon="repair" label={"修复草\n图"} width={54} off />
    </RibbonGroup>
    <RibbonGroup $pad={1}>
      <RibbonItem icon="snap" label={"快速捕\n捉"} width={50} drop />
    </RibbonGroup>
    <RibbonGroup $last>
      <RibbonItem icon="rapid" label={"快速草\n图"} width={50} />
      <RibbonItem icon="instant" label="Instant2D" width={60} active />
      <RibbonItem icon="shaded" label={"上色草\n图轮廓"} width={50} off />
      <RibbonItem icon="macro" label="Macro1" width={46} />
      <RibbonItem icon="macro" label="length" width={46} />
      <RibbonItem icon="macro" label={"创建边\n框矩形"} width={46} />
    </RibbonGroup>
  </RibbonRow>
);

const FeaturePanel = () => {
  const [query, setQuery] = useState("");

  return (
    <Panel>
      <PanelTop>
        <Knob />
      </PanelTop>
      <PanelTabs>
        {panelTabs.map((name, i) => (
          <PanelTab key={name} $active={i === 0} aria-label={name}>
            <Icon name={name} />
          </PanelTab>
        ))}
        <MoreTabs aria-label="更多标签">
          <svg width="8" height="12" viewBox="0 0 8 12" fill="none" stroke="#555" strokeWidth="2">
            <path d="M1.5 1l5 5-5 5" />
          </svg>
        </MoreTabs>
      </PanelTabs>
      <FilterBox>
        <Icon name="filter" />
        <input aria-label="过滤" value={query} onChange={(e) => setQuery(e.target.value)} />
      </FilterBox>
      <TreeRoot>
        <Icon name="part" />
        <span>试验&nbsp;&nbsp;(默认&lt;&lt;默认&gt;_显示状态 1&gt;)</span>
      </TreeRoot>
      <Tree>
        {tree
          .filter((row) => row.label.includes(query))
          .map((row) => (
            <TreeRow key={row.label} $off={row.off}>
              <Twist>{row.open && <Arrow />}</Twist>
              <Icon name={row.icon} />
              <span>{row.label}</span>
            </TreeRow>
          ))}
      </Tree>
      <RollbackBar />
      <PanelEdge>
        <Knob />
      </PanelEdge>
    </Panel>
  );
};

const Scene = () => (
  <SceneSvg viewBox="309 201 1178 772" preserveAspectRatio="xMidYMin meet" aria-label="模型">
    <g fill="#dde1eb">
      <path d="M1198 229.5h28q-14 4-28 0z" />
      <path d="M1185 238h51l-6 8q-3 10 1 26 4 28 14 45 14 32 34 56l44 50q30 32 62 52 46 29 102 65v54q-70 14-149 22-110 8-230 1L1040 560L960 471q52-28 88-56 34-24 52-46 14-20 30-38l24-28q20-22 30-40 5-8 5-18l-1-4z" />
    </g>
    <path
      d="M1205 380q18 0 40 20l74 66q50 42 71 66 16 20 4 36-6 8-32 14-60 12-140 16-60 3-112 2H1080V492Q1128 462 1170 412q14-20 25-28 4-4 10-4z"
      fill="#d9dde7"
    />
    <path d="M699 466q1-4 7-4l390 16q6 0 7 5l6 137-400-20-22 69-6-138z" fill="#f6f6f9" />
    <path d="M1101 484l5 131" stroke="#cfcbd4" strokeWidth="3" />
    <g fill="none" stroke="#000" strokeWidth="1.2">
      <path d="M687 669l-6-138 18-65q1-4 7-4l390 16q6 0 7 5l6 137" />
      <path d="M1078 620l4 69" />
      <path
        d="M687 669l17-62q2-7 9-7l391 16q5 1 5 6l-17 67h-10l18-68-385-16-18 64z"
        fill="#858585"
      />
    </g>
    <g strokeWidth="2" fill="none">
      <path d="M351 912v-10" stroke="#176b1c" />
      <path d="M350 915h22" stroke="#d8201c" />
      <path d="M349 914v18" stroke="#2424c4" strokeWidth="3" />
    </g>
    <path d="M351 898l5 9-4 3-5-3z" fill="#125c17" />
    <path d="M379 916l-10-4v8z" fill="#c41818" />
    <path d="M349 941l-5-8 3-2h5l3 2z" fill="#1717a8" />
    <circle cx="351" cy="914" r="3" fill="#2c4c2c" />
    <g fontFamily="Liberation Serif, serif" fontSize="10">
      <text x="349" y="899" fill="#176b1c">
        Y
      </text>
      <text x="376" y="919" fill="#d8201c">
        X
      </text>
      <text x="346" y="948" fill="#2424c4">
        Z
      </text>
    </g>
  </SceneSvg>
);

const TaskPane = () => (
  <Pane>
    <PaneTabs>
      {taskTabs.map((name, i) => (
        <PaneTab key={name} $active={i === 0} aria-label={name}>
          <Icon name={name} />
        </PaneTab>
      ))}
    </PaneTabs>
    <PaneHead aria-label="折叠">
      <svg width="12" height="10" viewBox="0 0 12 10" fill="none" stroke="#222" strokeWidth="2">
        <path d="M5.5 1l-4 4 4 4M10.5 1l-4 4 4 4" />
      </svg>
    </PaneHead>
    <PaneWelcome>
      <Icon name="home" />
      <span>欢迎使用</span>
    </PaneWelcome>
    <PaneTitle>
      <small>SOLIDWORKS</small>
    </PaneTitle>
    <PaneTitle>在线资源</PaneTitle>
    <PaneTitle>订阅服务</PaneTitle>
    <PaneLink href="#subscription">
      <Icon name="swGlobe" />
      <span>订阅服务</span>
    </PaneLink>
  </Pane>
);

const ImeBar = () => (
  <Ime>
    <ImeLogo width="32" height="32" viewBox="0 0 32 32" aria-hidden="true">
      <path d="M4 5L24 1q3 0 4 3l4 20q0 3-3 4L11 31q-4 0-5-4L1 9q0-3 3-4z" fill="#f2541b" />
      <path
        d="M25 8q-10-2-14 0-5 3 0 5l9 2q7 3 2 7-5 3-14 2"
        fill="none"
        stroke="#fff"
        strokeWidth="3.5"
      />
    </ImeLogo>
    <ImeTools>
      <ImeLang>英</ImeLang>
      <Tools items={["punct", "mic", "keyboard", "shirt", "tiles", "mascot"]} width={24} />
    </ImeTools>
  </Ime>
);

const Recorder = () => (
  <RecBar>
    <RecHandle />
    <RecTime>00:00</RecTime>
    <RecTime $wide>24FPS</RecTime>
    <Tools items={["recStop", "recPause"]} width={31} />
    <RecDivider />
    <Tools items={recorderTools} width={31} />
    <RecTick />
    <Tools items={["torch"]} width={30} />
    <Tools items={["dots"]} width={16} />
    <RecDivider />
    <Tools items={["back", "forward"]} width={31} />
    <RecDivider />
    <Tools items={["drag", "quit", "restart"]} width={32} />
    <Pointer>
      <Icon name="cursor" size={24} />
    </Pointer>
  </RecBar>
);

const App = () => (
  <>
    <GlobalStyle />
    <Window>
      <TopBar />
      <ToolRow>
        <ToolBox>
          <Grip />
          <Tools items={addinTools} />
        </ToolBox>
      </ToolRow>
      <ToolRow $line>
        <ToolBox $open>
          <Grip />
          <Tools items={macroTools} width={27} />
        </ToolBox>
      </ToolRow>
      <Ribbon />
      <Body>
        <Main>
          <TabRow>
            {tabs.map((label) => (
              <Tab key={label} $active={label === "草图"} $latin={label === "Simulation"}>
                {label}
              </Tab>
            ))}
            <ViewTools>
              <Tools items={viewTools} soft />
            </ViewTools>
            <WindowTools>
              <Tools items={windowTools} />
            </WindowTools>
          </TabRow>
          <Work>
            <SideBar>
              <GripTop />
              <Tools items={noteTools} />
            </SideBar>
            <SideBar $second>
              <GripTop />
              <Tools items={cubeTools} />
            </SideBar>
            <FeaturePanel />
            <Viewport>
              <Scene />
            </Viewport>
          </Work>
          <SheetTabs>
            {sheetArrows.map((d) => (
              <SheetNav key={d} aria-label="切换">
                <svg width="13" height="13" viewBox="0 0 13 13" fill="#8a8a8c" stroke="#858587">
                  <path d={d} />
                </svg>
              </SheetNav>
            ))}
            <SheetTab $active>模型</SheetTab>
            <SheetTab>3D 视图</SheetTab>
            <SheetTab>运动算例 1</SheetTab>
          </SheetTabs>
        </Main>
        <TaskPane />
      </Body>
      <FilterRow>
        <Tools items={["funnelGray", "funnelsGray", "funnels"]} width={27} />
        <SelectSplit>
          <SelectMain $wide aria-label="选择">
            <Icon name="cursor" />
          </SelectMain>
          <Caret aria-label="选择选项" />
        </SelectSplit>
        <Tools items={["cursorGray", "|"]} width={27} />
        <Tools items={filterTools} width={27} />
        <FilterTail>
          <Tools items={tailTools} width={27} />
        </FilterTail>
      </FilterRow>
      <StatusBar>SOLIDWORKS Premium 2018 SP5.0</StatusBar>
      <Taskbar>
        <TaskSearch />
        <TaskActive />
      </Taskbar>
      <ImeBar />
      <Recorder />
    </Window>
  </>
);

export default App;

/* ---------- styles ---------- */

const GlobalStyle = createGlobalStyle`
  * {
    box-sizing: border-box;
  }

  body {
    margin: 0;
    background: #f6f6f9;
    color: #111;
    font: 13px/16px "Noto Sans", "Noto Sans CJK SC", sans-serif;
  }

  button, input {
    font: inherit;
    color: inherit;
    margin: 0;
    padding: 0;
    border: none;
    background: none;
  }

  small {
    font-size: 11px;
  }
`;

const Window = styled.div`
  position: relative;
  display: flex;
  flex-direction: column;
  min-height: 100vh;
  overflow: hidden;
`;

const Svg = styled.svg`
  display: block;
  flex: none;
`;

const ToolButton = styled.button`
  flex: none;
  width: ${({ $width }) => $width}px;
  height: 26px;
  display: grid;
  place-items: center;
`;

const Caret = styled.button`
  flex: none;
  width: 13px;
  height: 26px;
  display: grid;
  place-items: center;

  &::after {
    content: "";
    border: 3px solid transparent;
    border-top-color: ${({ $soft }) => ($soft ? "#a0a6ae" : "#333")};
    border-bottom: none;
  }
`;

const Triangle = styled.i`
  border: 3px solid transparent;
  border-top-color: ${({ $off }) => ($off ? "#999" : "#222")};
  border-bottom: none;
`;

const Divider = styled.span`
  flex: none;
  width: 1px;
  height: 22px;
  margin: 0 5px 0 2px;
  background: #9a9a9a;
`;

const TopRow = styled.header`
  display: flex;
  height: 32px;
`;

const MenuArea = styled.div`
  display: flex;
  flex: none;
  border-right: 2px solid #c0c0c4;
  border-bottom: 1px solid #111;
`;

const TopGap = styled.div`
  width: 11px;
  border-right: 1px solid #888;
`;

const LogoBox = styled.div`
  display: flex;
  align-items: center;
  width: 144px;
  padding-left: 5px;
  border-right: 1px solid #888;
  background: linear-gradient(172deg, transparent 75%, #d4d4d6 76%);
`;

const LogoText = styled.div`
  margin: 8px 0 0 1px;
  font: italic 300 16px/16px "Open Sans", sans-serif;
  color: #d9261c;

  b {
    font-weight: 700;
  }
`;

const MenuNav = styled.nav`
  display: flex;
  align-items: center;
  gap: 16px;
  width: 562px;
  padding-left: 26px;
`;

const MenuButton = styled.button`
  white-space: nowrap;
`;

const PinSlot = styled.button`
  width: 44px;
  padding-left: 22px;
`;

const QuickArea = styled.div`
  display: flex;
  flex: 1;
  align-items: center;
  padding-left: 13px;
  border-bottom: 1px solid #888;
`;

const SelectSplit = styled.div`
  display: flex;
  align-items: center;
  height: 26px;
  border: 1px solid #777;
`;

const SelectMain = styled.button`
  width: ${({ $wide }) => ($wide ? 29 : 24)}px;
  height: 24px;
  display: grid;
  place-items: center;
  background: #b1b1b3;
  border-right: 1px solid #777;
`;

const DocTitle = styled.span`
  margin-left: 158px;
  font-size: 12px;
`;

const ToolRow = styled.div`
  display: flex;
  height: ${({ $line }) => ($line ? 33 : 32)}px;
  border-bottom: ${({ $line }) => ($line ? "1px solid #888" : "none")};
`;

const ToolBox = styled.div`
  display: flex;
  align-items: center;
  padding: 0 7px 0 ${({ $open }) => ($open ? 0 : 1)}px;
  border-right: 1px solid #888;
  border-bottom: ${({ $open }) => ($open ? "none" : "1px solid #888")};
`;

const Grip = styled.span`
  width: 3px;
  height: 26px;
  margin: 0 6px 0 4px;
  background: radial-gradient(circle, #8a8a8a 1px, transparent 1px) 0 0 / 3px 4px;
`;

const RibbonRow = styled.section`
  display: flex;
  height: 82px;
  padding: 1px 0 2px;
  border-bottom: 1px solid #888;
`;

const RibbonGroup = styled.div`
  display: flex;
  padding-left: ${({ $pad = 0 }) => $pad}px;
  border-right: ${({ $last }) => ($last ? "none" : "1px solid #cfcfd2")};
`;

const RibbonButton = styled.button`
  width: ${({ $width }) => $width}px;
  display: flex;
  flex-direction: column;
  align-items: center;
  padding-top: ${({ $drop }) => ($drop ? 5 : 11)}px;
  color: ${({ $off }) => ($off ? "#b9b9bc" : "#111")};

  ${Triangle} {
    margin-top: 14px;
  }

  ${({ $active }) =>
    $active &&
    css`
      background: #b1b1b3;
      border: 1px solid #666;
      padding-top: 10px;
    `}
`;

const RibbonLabel = styled.span`
  min-height: 26px;
  font-size: ${({ $latin }) => ($latin ? 11 : 13)}px;
  line-height: 13px;
  white-space: pre;
`;

const SketchGrid = styled.div`
  display: grid;
  grid-template-columns: 40px 40px 40px 27px;
  grid-template-rows: repeat(3, 26px);
  padding-left: 1px;
  border-right: 1px solid #cfcfd2;
`;

const SketchCell = styled.div`
  display: flex;
`;

const SideList = styled.div`
  display: flex;
  flex-direction: column;
  width: 145px;
`;

const SideItem = styled.button`
  display: flex;
  align-items: center;
  gap: 6px;
  height: 26px;
  padding: 0 6px 2px 2px;
  color: #b9b9bc;

  ${Triangle} {
    margin-left: auto;
  }
`;

const Body = styled.div`
  display: flex;
  flex: 1;
`;

const Main = styled.main`
  display: flex;
  flex-direction: column;
  flex: 1;
  min-width: 0;
`;

const TabRow = styled.div`
  display: flex;
  height: 22px;
`;

const Tab = styled.button`
  flex: none;
  min-width: 56px;
  padding: 0 ${({ $latin }) => ($latin ? 8 : 7)}px 0 8px;
  font-size: ${({ $latin }) => ($latin ? 11 : 13)}px;
  line-height: 20px;
  color: #222;
  background: ${({ $active }) => ($active ? "#f6f6f9" : "#cdcdcf")};
  border-right: 1px solid #888;
  border-bottom: 1px solid #888;
`;

const ViewTools = styled.div`
  display: flex;
  margin: 2px 0 0 105px;
`;

const WindowTools = styled.div`
  display: flex;
  margin: 2px 7px 0 auto;
`;

const Work = styled.div`
  display: flex;
  flex: 1;
`;

const SideBar = styled.div`
  display: flex;
  flex-direction: column;
  align-items: center;
  align-self: flex-start;
  width: ${({ $second }) => ($second ? 33 : 33)}px;
  padding-bottom: ${({ $second }) => ($second ? 6 : 8)}px;
  border-bottom: 1px solid #888;
  border-left: ${({ $second }) => ($second ? "1px solid #888" : "none")};
  margin-right: ${({ $second }) => ($second ? 1 : 0)}px;

  ${Divider} {
    width: 25px;
    height: 1px;
    margin: 2px 0 5px;
  }
`;

const GripTop = styled.span`
  width: 27px;
  height: 3px;
  margin: 2px 0 8px;
  background: radial-gradient(circle, #8a8a8a 1px, transparent 1px) 0 0 / 4px 3px;
`;

const Panel = styled.aside`
  position: relative;
  width: 242px;
  flex: none;
  padding-right: 2px;
  border-left: 1px solid #cfcfd2;
  border-right: 1px solid #888;
`;

const Knob = styled.span`
  width: 6px;
  height: 6px;
  border: 1px solid #888;
  border-radius: 50%;
  background: #ddd;
`;

const PanelTop = styled.div`
  display: grid;
  place-items: center;
  height: 20px;
  padding-top: 5px;
  border-top: 1px solid #9db5bd;
  border-bottom: 1px solid #cfcfd2;
`;

const PanelTabs = styled.div`
  display: flex;
  height: 26px;
  margin-top: 4px;
`;

const PanelTab = styled.button`
  display: grid;
  place-items: center;
  width: 40px;
  background: ${({ $active }) => ($active ? "#f6f6f9" : "#cdcdcf")};
  border: solid #888;
  border-width: 1px 1px ${({ $active }) => ($active ? 0 : 1)}px 0;
`;

const MoreTabs = styled.button`
  flex: 1;
  padding-left: 17px;
  border-bottom: 1px solid #b5b5b8;
`;

const FilterBox = styled.label`
  display: flex;
  align-items: center;
  height: 26px;
  margin: 0 4px 1px 3px;
  border: 1px solid #cfcfd2;

  input {
    flex: 1;
    min-width: 0;
    outline: none;
  }
`;

const TreeRoot = styled.div`
  display: flex;
  align-items: center;
  gap: 3px;
  height: 22px;
  padding-left: 2px;
  font-size: 12px;
  white-space: nowrap;
`;

const Tree = styled.ul`
  margin: 0;
  padding: 0;
  list-style: none;
`;

const TreeRow = styled.li`
  display: flex;
  align-items: center;
  gap: 4px;
  height: 22px;
  font-size: 12px;
  color: ${({ $off }) => ($off ? "#8f8f92" : "#111")};
`;

const Twist = styled.span`
  display: grid;
  place-items: center;
  width: 20px;
`;

const Arrow = styled.i`
  border: 4px solid transparent;
  border-left-color: #555;
  border-right: none;
`;

const RollbackBar = styled.div`
  height: 4px;
  background: #3388c8;
`;

const PanelEdge = styled.div`
  position: absolute;
  z-index: 1;
  left: 100%;
  top: 355px;
  display: grid;
  place-items: center;
  width: 8px;
  height: 39px;
  background: #f6f6f9;
  border: 1px solid #888;
  border-left: none;
`;

const Viewport = styled.div`
  position: relative;
  flex: 1;
  border-bottom: 1px solid #888;
`;

const SceneSvg = styled.svg`
  position: absolute;
  inset: 0;
  width: 100%;
  height: 100%;
`;

const SheetTabs = styled.div`
  display: flex;
  height: 14px;
  margin-left: 93px;
`;

const SheetNav = styled.button`
  width: 16px;
  background: #b5b5b7;
  border: 1px solid #999;
  overflow: hidden;
`;

const SheetTab = styled.button`
  height: 14px;
  padding: 0 8px;
  margin-left: ${({ $active }) => ($active ? 5 : 0)}px;
  line-height: 12px;
  white-space: nowrap;
  background: ${({ $active }) => ($active ? "#f6f6f9" : "#cdcdcf")};
  border-right: 1px solid #888;

  &:last-child {
    padding-right: 15px;
  }
`;

const Pane = styled.aside`
  position: relative;
  width: 67px;
  flex: none;
  padding-left: 3px;
  white-space: nowrap;

  &::before {
    content: "";
    position: absolute;
    inset: 0 auto 0 0;
    width: 3px;
    border-right: 1px solid #777;
    background: linear-gradient(#2a7fc0, #58a4d0 5%, #8a8f96 8%, #3d7ba8 45%, #d8963f 52%, #e0a24c 62%, #3b4a58 72%, #c98b3c 78%, #2c6ea0);
  }
`;

const PaneHead = styled.button`
  display: flex;
  align-items: center;
  width: 100%;
  height: 22px;
  padding-left: 9px;
  background: #b1b1b3;
  border-bottom: 1px solid #111;
`;

const PaneTabs = styled.div`
  position: absolute;
  z-index: 1;
  top: 75px;
  left: -24px;
  display: flex;
  flex-direction: column;
`;

const PaneTab = styled.button`
  display: grid;
  place-items: center;
  width: 26px;
  height: 24px;
  background: ${({ $active }) => ($active ? "#f6f6f9" : "#cdcdcf")};
  border: 1px solid #888;
  border-bottom: none;

  &:last-child {
    border-bottom: 1px solid #888;
  }
`;

const PaneWelcome = styled.div`
  display: flex;
  align-items: center;
  gap: 4px;
  height: 73px;
  padding-left: 14px;
  overflow: hidden;
  font-size: 12px;
  color: #888;
`;

const PaneTitle = styled.h2`
  height: 48px;
  margin: 0 0 0 14px;
  padding: 4px 0 0 3px;
  overflow: hidden;
  border-top: 1px solid #888;
  font-size: 12px;
  line-height: 16px;
  font-weight: 600;
  color: #444;
`;

const PaneLink = styled.a`
  display: flex;
  align-items: center;
  gap: 4px;
  margin: -22px 0 0 16px;
  overflow: hidden;
  font-size: 12px;
  color: #888;
  text-decoration: none;
`;

const FilterRow = styled.div`
  display: flex;
  align-items: center;
  height: 34px;
  padding: 3px 0 0 14px;
  border-bottom: 1px solid #888;
  overflow: hidden;
`;

const FilterTail = styled.div`
  display: flex;
  align-items: center;
  width: 408px;
  height: 30px;
  margin-left: 8px;
  padding-left: 38px;
  border: solid #888;
  border-width: 0 1px;
`;

const StatusBar = styled.footer`
  height: 18px;
  padding: 2px 0 0 1px;
  font-size: 12px;
  line-height: 16px;
`;

const Taskbar = styled.div`
  display: flex;
  height: 4px;
  padding-left: 48px;
  background: #2c2f33;
`;

const TaskSearch = styled.div`
  width: 344px;
  background: #f2f2f3;
`;

const TaskActive = styled.div`
  width: 44px;
  margin-left: 149px;
  background: #4a5666;
`;

const Ime = styled.div`
  position: absolute;
  top: 143px;
  right: 112px;
  display: flex;
  align-items: center;
`;

const ImeLogo = styled.svg`
  position: relative;
`;

const ImeTools = styled.div`
  display: flex;
  align-items: center;
  height: 26px;
  margin: 2px 0 0 -16px;
  padding-left: 20px;
  border: 1px solid #a9c9e6;
`;

const ImeLang = styled.b`
  width: 21px;
  font-size: 14px;
  color: #0a6fdc;
`;

const RecBar = styled.div`
  position: absolute;
  right: 1px;
  bottom: 10px;
  display: flex;
  align-items: center;
  height: 35px;
  overflow: hidden;
  background: #f6f6f9;
  border: 1px solid #3385ff;
  border-radius: 5px;
`;

const RecHandle = styled.div`
  width: 12px;
  height: 100%;
  background: #3385ff;
`;

const RecTime = styled.span`
  width: ${({ $wide }) => ($wide ? 49 : 45)}px;
  margin-left: 5px;
  font-size: 15px;
`;

const RecDivider = styled.span`
  width: 2px;
  height: 30px;
  margin: 0 6px;
  background: #cfcfd2;
`;

const RecTick = styled.span`
  width: 1px;
  height: 14px;
  margin: 0 2px;
  background: #cfcfd2;
`;

const Pointer = styled.span`
  position: absolute;
  left: 124px;
  top: 13px;
`;
